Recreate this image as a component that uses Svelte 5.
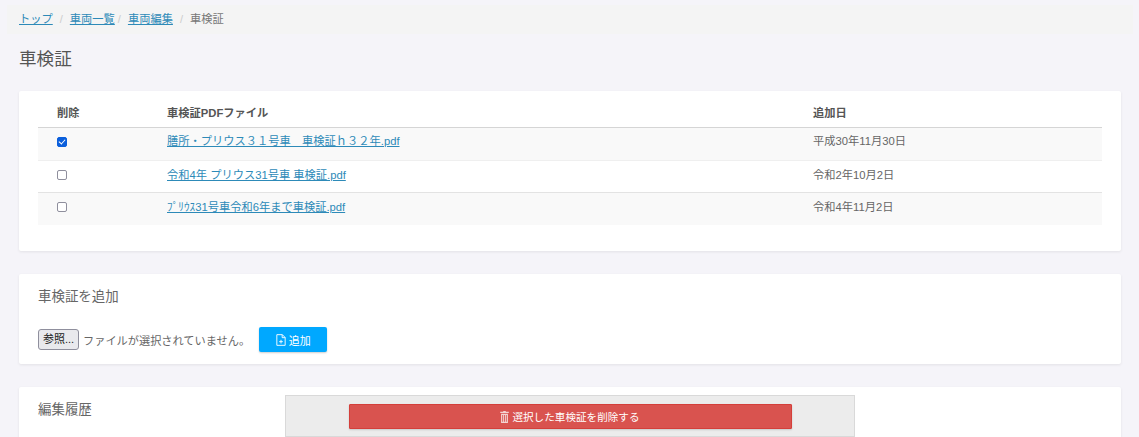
<script>
  const rows = [
    { checked: true, name: '膳所・プリウス３１号車　車検証ｈ３２年.pdf', date: '平成30年11月30日' },
    { checked: false, name: '令和4年 プリウス31号車 車検証.pdf', date: '令和2年10月2日' },
    { checked: false, name: 'ﾌﾟﾘｳｽ31号車令和6年まで車検証.pdf', date: '令和4年11月2日' }
  ];
</script>

<div class="page">
  <nav class="crumbs">
    <a href="#top">トップ</a><span class="sep wide">/</span><a href="#list">車両一覧</a><span class="sep tight">/</span><a href="#edit">車両編集</a><span class="sep wide">/</span><span class="cur">車検証</span>
  </nav>
  <h1>車検証</h1>

  <section class="card first">
    <table>
      <thead>
        <tr><th class="c1">削除</th><th class="c2">車検証PDFファイル</th><th>追加日</th></tr>
      </thead>
      <tbody>
        {#each rows as r}
          <tr>
            <td class="c1"><input type="checkbox" checked={r.checked} /></td>
            <td class="c2"><a href="#f">{r.name}</a></td>
            <td>{r.date}</td>
          </tr>
        {/each}
      </tbody>
    </table>
  </section>

  <section class="card second">
    <h2>車検証を追加</h2>
    <div class="upload">
      <span class="browse">参照...</span>
      <span class="none">ファイルが選択されていません。</span>
      <button class="add">
        <svg viewBox="0 0 12 14" width="10" height="12" fill="none" stroke="#fff" stroke-width="1.1">
          <path d="M1 .6h6.6L11 4v9.4H1z" /><path d="M7.4 .6V4.2H11" /><path d="M6 6.8v4.4M3.8 9h4.4" />
        </svg>
        追加
      </button>
    </div>
  </section>

  <section class="card third">
    <h2>編集履歴</h2>
  </section>

  <div class="delete-bar">
    <button class="del">
      <svg viewBox="0 0 10 14" width="9" height="12" fill="#f3d5d3">
        <path d="M3.5 0h3v1H10v1.4H0V1h3.500z" />
        <path d="M1 3.2h8V14H1zM2.4 4.8v7.6h1V4.800zM4.500 4.800v7.600h1V4.800zM6.600 4.800v7.600h1V4.800z" fill-rule="evenodd" />
      </svg>
      選択した車検証を削除する
    </button>
  </div>
</div>

<style>
  :global(body) {
    margin: 0;
    background: #f5f4f9;
    overflow: hidden;
  }
  .page {
    position: relative;
    height: 437px;
    overflow: hidden;
    padding: 5px 18px 0 19px;
    box-sizing: border-box;
    font-family: "Liberation Sans", "Noto Sans CJK JP", sans-serif;
    font-size: 11.25px;
    color: #666;
  }
  a {
    color: #2d8ab8;
    text-decoration: underline;
  }
  .crumbs {
    height: 29px;
    box-sizing: border-box;
    margin: 0 -12px;
    padding: 0 12px 1px;
    background: #f4f4f4;
    display: flex;
    align-items: center;
    font-size: 11.25px;
    line-height: 24px;
  }
  .sep { color: #ccc; font-size: 11px; }
  .sep.wide { margin: 0 7px; }
  .sep.tight { margin: 0 7px 0 3px; }
  .sep.wide:nth-of-type(5) { margin: 0 8px; }
  .cur { color: #777; }
  h1 {
    margin: 14px 0 21px;
    font-size: 17.6px;
    font-weight: 400;
    line-height: 22px;
    color: #555;
  }
  .card {
    background: #fff;
    border-radius: 2px;
    box-shadow: 0 1px 3px rgba(0, 0, 0, 0.08);
    box-sizing: border-box;
    padding: 0 19px;
  }
  .first {
    height: 160px;
    padding-top: 7px;
  }
  table {
    width: 100%;
    border-collapse: collapse;
    table-layout: fixed;
  }
  th {
    height: 27px;
    text-align: left;
    font-weight: 700;
    font-size: 11.25px;
    color: #555;
    padding: 0 0 2px;
    border-bottom: 1px solid #d5d5d5;
  }
  td {
    height: 32px;
    padding: 0 0 4px;
    box-sizing: border-box;
    border-bottom: 1px solid #e3e3e3;
    vertical-align: middle;
    line-height: 14px;
  }
  tbody tr:first-child td { height: 33px; padding-bottom: 7px; border-bottom-color: #efefef; }
  tbody tr:first-child td.c1 { padding-bottom: 5px; }
  tbody tr:last-child td { border-bottom: 0; padding-bottom: 4px; }
  tbody tr:last-child td.c1 { padding-bottom: 5px; }
  tbody tr:nth-child(odd) td { background: #f9f9f9; }
  th:first-child, td:first-child { padding-left: 19px; }
  .c1 { width: 110px; }
  .c2 { width: 646px; }
  input[type="checkbox"] {
    appearance: none;
    display: block;
    position: relative;
    box-sizing: border-box;
    width: 10px;
    height: 10px;
    margin: 1px 0 0;
    border: 1.5px solid #8f8f9d;
    border-radius: 2px;
    background: #fff;
  }
  input[type="checkbox"]:checked {
    background: #0b5fdc;
    border-color: #0b5fdc;
  }
  input[type="checkbox"]:checked::after {
    content: "";
    position: absolute;
    left: 1.8px;
    top: -0.3px;
    width: 3px;
    height: 5px;
    border: solid #fff;
    border-width: 0 1.6px 1.6px 0;
    transform: rotate(42deg);
  }
  .second {
    height: 90px;
    margin-top: 23px;
    padding-top: 14px;
  }
  h2 {
    margin: 0;
    font-size: 13.44px;
    font-weight: 400;
    line-height: 17px;
    color: #666;
  }
  .upload {
    display: flex;
    align-items: center;
    margin-top: 22px;
    height: 25px;
  }
  .browse {
    box-sizing: border-box;
    width: 41px;
    height: 21px;
    background: #e9e9ed;
    border: 1px solid #8f8f9d;
    border-radius: 3px;
    color: #222;
    font-size: 11px;
    line-height: 19px;
    text-align: center;
  }
  .none {
    margin-left: 4px;
    font-size: 11.2px;
    color: #666;
  }
  .add {
    margin-left: 9px;
    width: 68px;
    height: 25px;
    background: #00a8ff;
    border: 0;
    border-radius: 2px;
    box-shadow: 0 1px 2px rgba(0, 0, 0, 0.2);
    color: #fff;
    font: inherit;
    font-size: 11px;
    display: flex;
    align-items: center;
    justify-content: center;
    gap: 3px;
    padding: 0;
  }
  .third {
    height: 80px;
    margin-top: 23px;
    padding-top: 14px;
  }
  .delete-bar {
    position: absolute;
    left: 285px;
    top: 395px;
    width: 570px;
    height: 42px;
    box-sizing: border-box;
    background: #ececec;
    border: 1px solid #d9d9d9;
    display: flex;
    justify-content: center;
    padding-top: 8px;
  }
  .del {
    width: 443px;
    height: 25px;
    background: #d9534f;
    border: 1px solid #d43f3a;
    border-radius: 1px;
    box-shadow: 0 1px 2px rgba(0, 0, 0, 0.15);
    color: #fff;
    font: inherit;
    font-size: 10.6px;
    display: flex;
    align-items: center;
    justify-content: center;
    gap: 3px;
    padding: 0;
  }
</style>
